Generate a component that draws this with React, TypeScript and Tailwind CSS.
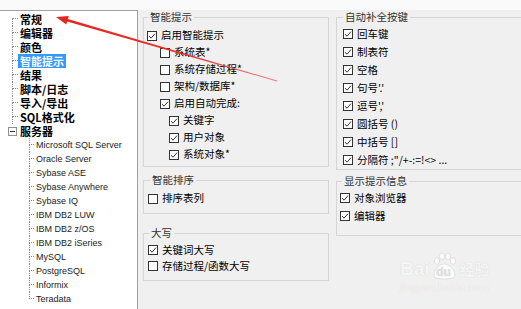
import React from 'react';

const CJK = "font-['Noto_Sans_CJK_SC','Noto_Sans',sans-serif]";
const LATIN = "font-['Liberation_Sans','Noto_Sans_CJK_SC',sans-serif]";

const topItems = ['常规', '编辑器', '颜色', '智能提示', '结果', '脚本/日志', '导入/导出', 'SQL格式化'];
const servers = [
  'Microsoft SQL Server',
  'Oracle Server',
  'Sybase ASE',
  'Sybase Anywhere',
  'Sybase IQ',
  'IBM DB2 LUW',
  'IBM DB2 z/OS',
  'IBM DB2 iSeries',
  'MySQL',
  'PostgreSQL',
  'Informix',
  'Teradata',
];

// tree connector: ├─ / └─ drawn with dotted borders
function Branch({ first = false, last = false, className = '' }: { first?: boolean; last?: boolean; className?: string }) {
  return (
    <span className={`flex shrink-0 flex-col ${className}`}>
      <span className={`h-[7px] border-b border-dotted border-[#8c8c8c] ${first ? '' : 'border-l'}`} />
      <span className={`flex-1 border-dotted border-[#8c8c8c] ${last ? '' : 'border-l'}`} />
    </span>
  );
}

function Tree() {
  return (
    <div className="w-[138px] shrink-0 border-t border-r border-[#a0a0a0] bg-white pt-px">
      {topItems.map((t, i) => (
        <div key={t} className="flex h-[14px]">
          <Branch first={i === 0} className="ml-[12px] w-[6px]" />
          <span
            className={`${CJK} px-[2px] text-[11px] font-bold leading-[14px] ${
              t === '智能提示' ? 'bg-[#3399ff] text-white' : 'text-black'
            }`}
          >
            {t}
          </span>
        </div>
      ))}
      <div className="flex h-[14px] items-center">
        <span className="ml-[8px] flex h-[9px] w-[9px] items-center justify-center border border-[#919191] bg-white">
          <span className="h-px w-[5px] bg-[#333]" />
        </span>
        <span className={`${CJK} ml-px px-[2px] text-[11px] font-bold leading-[14px] text-black`}>服务器</span>
      </div>
      {servers.map((s, i) => (
        <div key={s} className="flex h-[14px]">
          <Branch last={i === servers.length - 1} className="ml-[29px] w-[5px]" />
          <span className={`${LATIN} px-[2px] text-[9px] leading-[14px] text-[#222]`}>{s}</span>
        </div>
      ))}
    </div>
  );
}

function Box({ checked }: { checked?: boolean }) {
  return (
    <span className="flex h-[10px] w-[10px] shrink-0 items-center justify-center border border-[#333] bg-white">
      {checked && (
        <svg width="8" height="8" viewBox="0 0 8 8">
          <path d="M1 4.2 L3.1 6.2 L7 1.6" fill="none" stroke="#333" strokeWidth="1" />
        </svg>
      )}
    </span>
  );
}

function Check({ label, checked, className }: { label: string; checked?: boolean; className: string }) {
  return (
    <div className={`flex items-center gap-[4px] ${className}`}>
      <Box checked={checked} />
      <span className={`${CJK} whitespace-nowrap text-[10.5px] leading-none text-black`}>{label}</span>
    </div>
  );
}

function Group({ title, className, legendClass, children }: { title: string; className: string; legendClass: string; children: React.ReactNode }) {
  return (
    <fieldset className={`border border-[#d5d5d5] px-0 ${className}`}>
      <legend className={`${CJK} px-[2px] text-[10.5px] leading-[12px] text-[#333] ${legendClass}`}>{title}</legend>
      {children}
    </fieldset>
  );
}

function Arrow() {
  return (
    <svg className="pointer-events-none absolute inset-0" width="521" height="309" viewBox="0 0 521 309">
      <defs>
        <linearGradient id="shaft" x1="56" y1="17" x2="277" y2="81" gradientUnits="userSpaceOnUse">
          <stop offset="0" stopColor="#e3261f" />
          <stop offset="0.6" stopColor="#e8332c" />
          <stop offset="1" stopColor="#f07a78" />
        </linearGradient>
      </defs>
      <polygon
        points="56,17 68.74,15.98 67.86,19.05 277.11,80.62 276.89,81.38 67.14,21.55 66.26,24.62"
        fill="url(#shaft)"
      />
    </svg>
  );
}

function Watermark() {
  return (
    <div className="pointer-events-none absolute left-[400px] top-[252px] flex flex-col items-start text-white/80 [text-shadow:0_0_1px_#c8c8c8]">
      <div className="flex items-end">
        <span className={`${LATIN} text-[19px] font-bold leading-[22px]`}>Bai</span>
        <span className="relative flex h-[28px] w-[28px] items-end justify-center">
          <svg className="absolute left-0 top-0" width="28" height="28" viewBox="0 0 28 28">
            <g fill="none" stroke="#d0d0d0" strokeWidth="0.6">
              <ellipse cx="7" cy="9" rx="2.6" ry="3.4" fill="#fbfbfb" />
              <ellipse cx="12" cy="4.5" rx="2.6" ry="3.4" fill="#fbfbfb" />
              <ellipse cx="18" cy="4.5" rx="2.6" ry="3.4" fill="#fbfbfb" />
              <ellipse cx="23" cy="9" rx="2.6" ry="3.4" fill="#fbfbfb" />
              <path d="M4 24 C4 16 10 12 14 12 C18 12 25 16 25 24 C25 28 4 28 4 24 Z" fill="#fbfbfb" />
            </g>
          </svg>
          <span className={`${LATIN} relative text-[12px] font-bold leading-[16px] text-[#e4e4e4]`}>du</span>
        </span>
        <span className={`${CJK} ml-[2px] text-[15px] font-bold leading-[22px]`}>经验</span>
      </div>
      <span className={`${LATIN} mt-[1px] text-[11px] leading-[12px]`}>jingyan.baidu.com</span>
    </div>
  );
}

export default function App() {
  return (
    <div className="relative h-[309px] w-[521px] overflow-hidden bg-[#f0f0f0]">
      <div className="h-[10px] bg-[#fafafa]" />
      <div className="flex h-[299px]">
        <Tree />
        <div className="flex gap-[7px] pl-[5px]">
          <div className="flex w-[186px] shrink-0 flex-col">
            <Group title="智能提示" className="mt-px pt-[4px] pb-[3px]" legendClass="ml-[4px]">
              <Check label="启用智能提示" checked className="h-[17px] pl-[3px]" />
              <Check label="系统表*" className="h-[17px] pl-[16px]" />
              <Check label="系统存储过程*" className="h-[17px] pl-[16px]" />
              <Check label="架构/数据库*" className="h-[17px] pl-[16px]" />
              <Check label="启用自动完成:" checked className="h-[17px] pl-[16px]" />
              <Check label="关键字" checked className="h-[17px] pl-[25px]" />
              <Check label="用户对象" checked className="h-[17px] pl-[25px]" />
              <Check label="系统对象*" checked className="h-[17px] pl-[25px]" />
            </Group>
            <Group title="智能排序" className="mt-[7px] pt-[4px] pb-[6px]" legendClass="ml-[6px]">
              <Check label="排序表列" className="h-[17px] pl-[4px]" />
            </Group>
            <Group title="大写" className="mt-[13px] pt-[3px] pb-[6px]" legendClass="ml-[5px]">
              <Check label="关键词大写" checked className="h-[16px] pl-[4px]" />
              <Check label="存储过程/函数大写" className="h-[16px] pl-[4px]" />
            </Group>
          </div>
          <div className="flex w-[200px] shrink-0 flex-col">
            <Group title="自动补全按键" className="mt-px pt-[2px] pb-0" legendClass="ml-[6px]">
              <Check label="回车键" checked className="h-[18px] pl-[6px]" />
              <Check label="制表符" checked className="h-[18px] pl-[6px]" />
              <Check label="空格" checked className="h-[18px] pl-[6px]" />
              <Check label="句号'.'" checked className="h-[18px] pl-[6px]" />
              <Check label="逗号','" checked className="h-[18px] pl-[6px]" />
              <Check label="圆括号 ()" checked className="h-[18px] pl-[6px]" />
              <Check label="中括号 []" checked className="h-[18px] pl-[6px]" />
              <Check label={'分隔符 ;"/+-:=!<> ...'} checked className="h-[18px] pl-[6px]" />
            </Group>
            <Group title="显示提示信息" className="mt-[5px] pt-[2px] pb-[10px]" legendClass="ml-[5px]">
              <Check label="对象浏览器" checked className="h-[18px] pl-[3px]" />
              <Check label="编辑器" checked className="h-[18px] pl-[3px]" />
            </Group>
          </div>
        </div>
      </div>
      <Arrow />
      <Watermark />
    </div>
  );
}
